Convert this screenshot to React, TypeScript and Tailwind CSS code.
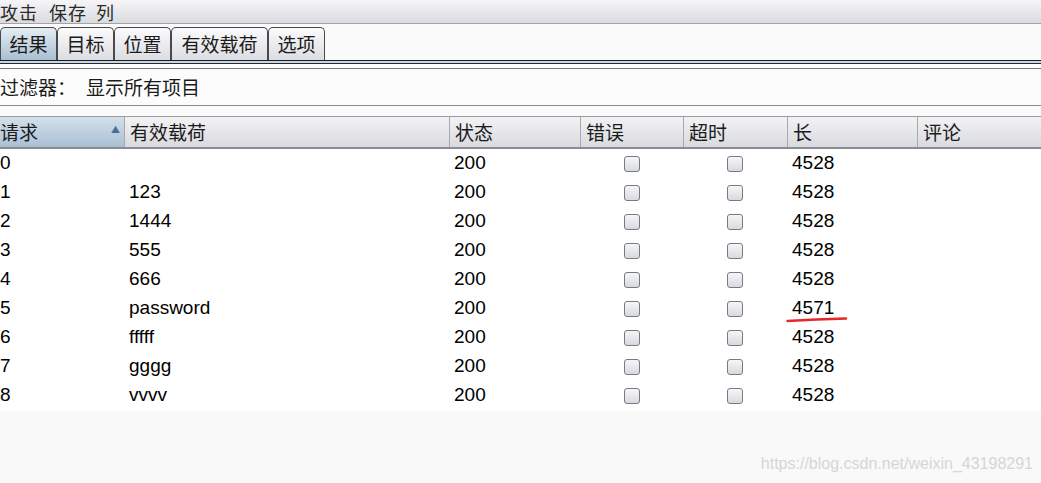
import React from 'react'

const cjk = '"Noto Sans CJK SC", "DejaVu Sans", sans-serif'
const arial = '"Liberation Sans", Arial, sans-serif'

const tabs = [
  { label: '结果', w: 'w-[57px]', active: true },
  { label: '目标', w: 'w-[57px]', active: false },
  { label: '位置', w: 'w-[57px]', active: false },
  { label: '有效载荷', w: 'w-[97px]', active: false },
  { label: '选项', w: 'w-[57px]', active: false },
]

const columns = [
  { label: '请求', sorted: true },
  { label: '有效载荷' },
  { label: '状态' },
  { label: '错误' },
  { label: '超时' },
  { label: '长' },
  { label: '评论' },
]

const rows = [
  { id: 0, payload: '', status: 200, len: 4528 },
  { id: 1, payload: '123', status: 200, len: 4528 },
  { id: 2, payload: '1444', status: 200, len: 4528 },
  { id: 3, payload: '555', status: 200, len: 4528 },
  { id: 4, payload: '666', status: 200, len: 4528 },
  { id: 5, payload: 'password', status: 200, len: 4571, marked: true },
  { id: 6, payload: 'fffff', status: 200, len: 4528 },
  { id: 7, payload: 'gggg', status: 200, len: 4528 },
  { id: 8, payload: 'vvvv', status: 200, len: 4528 },
]

const grid = 'grid grid-cols-[124px_325px_131px_103px_104px_130px_1fr]'

function Checkbox() {
  return (
    <span className="block w-[16px] h-[16px] rounded-[3px] border border-[#777a80] bg-gradient-to-b from-[#f6f6f8] to-[#d8dadf]" />
  )
}

export default function App() {
  return (
    <div className="w-[1041px] h-[483px] bg-[#fafafa] flex flex-col overflow-hidden text-[#1a1a1a]" style={{ fontFamily: cjk }}>
      {/* menu bar */}
      <div className="h-[24px] shrink-0 bg-gradient-to-b from-[#f6f6f8] to-[#dadbe0] border-b border-[#a4a4a8] flex items-center text-[18px] leading-[20px] text-[#2a2a2a] tracking-[1px]">
        <span className="mr-[11px]">攻击</span>
        <span className="mr-[9px]">保存</span>
        <span>列</span>
      </div>

      {/* tabs */}
      <div className="h-[36px] shrink-0 flex items-end">
        {tabs.map((t) => (
          <div
            key={t.label}
            className={`${t.w} h-[33px] border border-b-0 border-[#4a4a4e] rounded-t-[5px] flex items-center justify-center text-[19px] ${
              t.active
                ? 'bg-gradient-to-b from-[#e6edf3] to-[#a8bfd3]'
                : 'bg-gradient-to-b from-[#fbfbfc] to-[#dcdde2]'
            }`}
          >
            {t.label}
          </div>
        ))}
      </div>
      <div className="h-[1px] shrink-0 bg-[#1e1e1e]" />
      <div className="h-[2px] shrink-0 bg-[#c6d6e6]" />
      <div className="h-[1px] shrink-0 bg-[#2a2a2a]" />

      {/* filter */}
      <div className="h-[4px] shrink-0 bg-white" />
      <div className="h-[1px] shrink-0 bg-[#777]" />
      <div className="h-[36px] shrink-0 flex items-center text-[19px] bg-[#fcfcfc]">
        <span className="mr-[10px]">过滤器：</span>
        <span>显示所有项目</span>
      </div>
      <div className="h-[1px] shrink-0 bg-[#8a8a8a]" />
      <div className="h-[10px] shrink-0 bg-[#fafafa]" />

      {/* table header */}
      <div className={`${grid} h-[33px] shrink-0 border-t border-[#9c9ca0] border-b-2 border-b-[#8c8c90] text-[19px]`}>
        {columns.map((c, i) => (
          <div
            key={c.label}
            className={`flex items-center ${i === 0 ? '' : 'pl-[5px] border-l border-[#a9a9ad]'} ${
              c.sorted
                ? 'bg-gradient-to-b from-[#d3e0ea] to-[#a9c0d4]'
                : 'bg-gradient-to-b from-[#f3f3f5] to-[#d9dadf]'
            }`}
          >
            <span className="flex-1">{c.label}</span>
            {c.sorted && <span className="text-[9px] text-[#4a6f96] mr-[4px] mt-[-4px]">▲</span>}
          </div>
        ))}
      </div>

      {/* rows */}
      <div className="bg-white shrink-0 pb-[1px]" style={{ fontFamily: arial }}>
        {rows.map((r) => (
          <div key={r.id} className={`${grid} h-[29px] items-center text-[19px] text-black`}>
            <div>{r.id}</div>
            <div className="pl-[5px]">{r.payload}</div>
            <div className="pl-[5px]">{r.status}</div>
            <div className="flex justify-center">
              <Checkbox />
            </div>
            <div className="flex justify-center">
              <Checkbox />
            </div>
            <div className="pl-[5px] relative">
              {r.len}
              {r.marked && (
                <svg className="absolute left-[-1px] top-[22px]" width="62" height="7" viewBox="0 0 62 7">
                  <path d="M1.5 5 Q 30 3 60 2.5" stroke="#e8262b" strokeWidth="2.5" fill="none" strokeLinecap="round" />
                </svg>
              )}
            </div>
            <div />
          </div>
        ))}
      </div>

      {/* empty area + watermark */}
      <div className="flex-1 bg-[#f9f9f9] flex items-end justify-end pr-[8px] pb-[7px]">
        <span className="text-[16px] text-[#d6d6d6]" style={{ fontFamily: arial }}>
          https://blog.csdn.net/weixin_43198291
        </span>
      </div>
    </div>
  )
}
